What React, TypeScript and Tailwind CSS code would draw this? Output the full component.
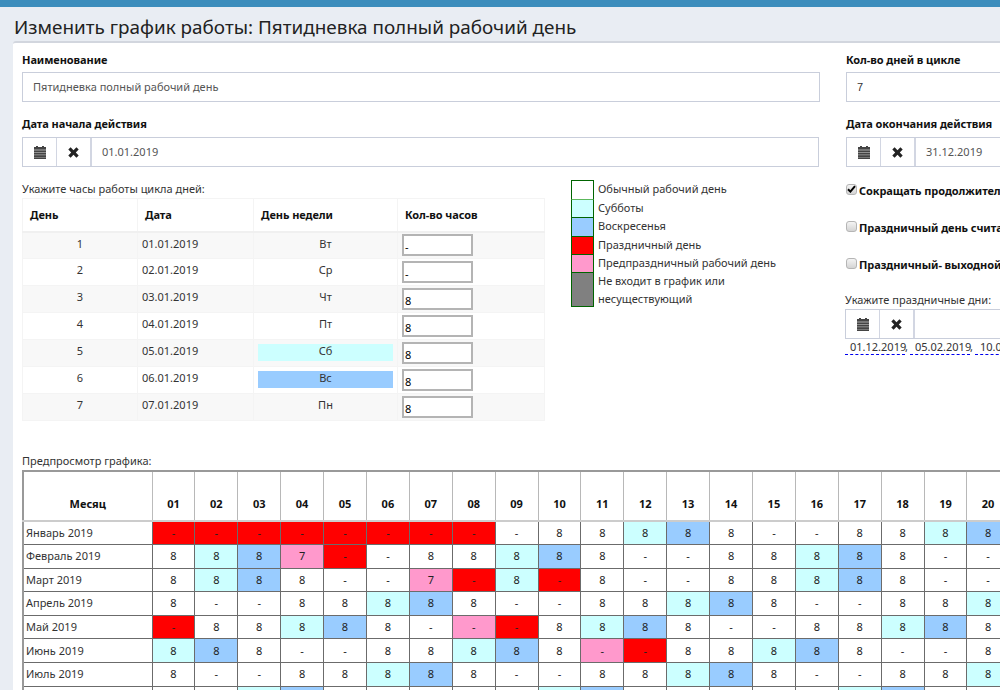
type Cell = string;
const months: [string, string][] = [
  ["Январь 2019", "R- R- R- R- R- R- R- R- - 8 8 S8 U8 8 - - 8 8 S8 U8"],
  ["Февраль 2019", "8 S8 U8 P7 R- - 8 8 S8 U8 8 - - 8 8 S8 U8 8 - -"],
  ["Март 2019", "8 S8 U8 8 - - P7 R- S8 R- 8 - - 8 8 S8 U8 8 - -"],
  ["Апрель 2019", "8 - - 8 8 S8 U8 8 - - 8 8 S8 U8 8 - - 8 8 S8"],
  ["Май 2019", "R- 8 8 S8 U8 8 - P- R- 8 S8 U8 8 - - 8 8 S8 U8 8"],
  ["Июнь 2019", "S8 U8 8 - - 8 8 S8 U8 8 P- R- 8 8 S8 U8 8 - - 8"],
  ["Июль 2019", "8 - - 8 8 S8 U8 8 - - 8 8 S8 U8 8 - - 8 8 S8"],
  ["Август 2019", "8 8 S8 U8 8 - - 8 8 S8 U8 8 - - 8 8 S8 U8 8 -"],
];

const cellBg = (c: Cell) =>
  c[0] === "R"
    ? "bg-[#ff0000]"
    : c[0] === "P"
      ? "bg-[#ff99cc]"
      : c[0] === "S"
        ? "bg-[#ccffff]"
        : c[0] === "U"
          ? "bg-[#99ccff]"
          : "bg-white";

const cellText = (c: Cell) => c.replace(/^[RPSU]/, "");

const days = ["01", "02", "03", "04", "05", "06", "07", "08", "09", "10", "11", "12", "13", "14", "15", "16", "17", "18", "19", "20"];

const cycle = [
  ["1", "01.01.2019", "Вт", "-", ""],
  ["2", "02.01.2019", "Ср", "-", ""],
  ["3", "03.01.2019", "Чт", "8", ""],
  ["4", "04.01.2019", "Пт", "8", ""],
  ["5", "05.01.2019", "Сб", "8", "bg-[#ccffff]"],
  ["6", "06.01.2019", "Вс", "8", "bg-[#99ccff]"],
  ["7", "07.01.2019", "Пн", "8", ""],
];

const legend: [string, string][] = [
  ["bg-white h-[19px]", "Обычный рабочий день"],
  ["bg-[#ccffff] h-[18px]", "Субботы"],
  ["bg-[#99ccff] h-[19px]", "Воскресенья"],
  ["bg-[#ff0000] h-[18px]", "Праздничный день"],
  ["bg-[#ff99cc] h-[18px]", "Предпраздничный рабочий день"],
];

function CalendarIcon() {
  return (
    <svg width="12" height="13" viewBox="0 0 12 13" className="text-[#444]">
      <path fill="currentColor" d="M2 0h2v1h4V0h2v1h2v12H0V1h2z" />
      <path fill="#fff" fillOpacity="0.55" d="M0 3.5h12v1H0zM0 6.3h12v.6H0zM0 8.6h12v.6H0zM0 10.9h12v.6H0z" />
    </svg>
  );
}

function CrossIcon() {
  return (
    <svg width="11" height="11" viewBox="0 0 11 11" className="text-[#222]">
      <path fill="currentColor" d="M2.6 0.3 5.5 3.2 8.4 0.3 10.7 2.6 7.8 5.5 10.7 8.4 8.4 10.7 5.5 7.8 2.6 10.7 0.3 8.4 3.2 5.5 0.3 2.6z" />
    </svg>
  );
}

function DateField({ value, className }: { value: string; className: string }) {
  return (
    <div className={`flex h-[30px] border border-[#c9cedb] bg-white ${className}`}>
      <div className="flex w-[34px] shrink-0 items-center justify-center border-r border-[#d2d6e2]">
        <CalendarIcon />
      </div>
      <div className="flex w-[35px] shrink-0 items-center justify-center border-r-2 border-[#d2d6e2]">
        <CrossIcon />
      </div>
      <div className="flex items-center pl-[10px] text-[#555]">{value}</div>
    </div>
  );
}

function Check({ checked, label, className }: { checked?: boolean; label: string; className: string }) {
  return (
    <div className={`flex h-[16px] items-center whitespace-nowrap font-bold tracking-[-0.08px] text-[#111] ${className}`}>
      <span className="relative mr-[2px] -mt-[4px] flex h-[11px] w-[11px] shrink-0 items-center justify-center rounded-[3px] border border-[#b5b5b5] bg-gradient-to-b from-[#f4f4f4] to-[#d4d4d4]">
        {checked && (
          <svg width="9" height="8" viewBox="0 0 9 8">
            <path d="M1 4.2 3.4 6.6 8 1.2" fill="none" stroke="#000" strokeWidth="2" />
          </svg>
        )}
      </span>
      {label}
    </div>
  );
}

export default function App() {
  return (
    <div className="flex h-[690px] w-[1000px] flex-col overflow-hidden bg-[#e9edf3] font-['Noto_Sans',sans-serif] text-[11px] text-[#333]">
      <div className="h-[7px] shrink-0 bg-[#3c8dbc]" />
      <h1 className="h-[34px] shrink-0 whitespace-nowrap pl-[14px] pt-[7px] text-[18.9px] leading-[27px] text-[#222]">
        Изменить график работы: Пятидневка полный рабочий день
      </h1>
      <div className="ml-[13px] flex-1 rounded-tl-[3px] border-t-2 border-[#d2d6de] bg-white pl-[9px] pt-[11px]">
        <div className="flex h-[399px]">
          <div className="w-[798px] shrink-0">
            <div className="h-[16px] font-bold leading-[12px] tracking-[-0.08px] text-[#111]">Наименование</div>
            <div className="mt-[2px] flex h-[30px] items-center border border-[#c9cedb] pl-[10px] text-[#555]">
              Пятидневка полный рабочий день
            </div>
            <div className="mt-[14px] h-[16px] font-bold leading-[16px] tracking-[-0.08px] text-[#111]">Дата начала действия</div>
            <DateField value="01.01.2019" className="mt-[5px] w-[797px]" />
            <div className="flex">
              <div className="w-[522px] shrink-0">
                <div className="mt-[14px] h-[17px] leading-[16px]">Укажите часы работы цикла дней:</div>
                <table className="w-[522px] table-fixed border-collapse">
                  <colgroup>
                    <col className="w-[115px]" />
                    <col className="w-[116px]" />
                    <col className="w-[144px]" />
                    <col className="w-[147px]" />
                  </colgroup>
                  <thead>
                    <tr className="h-[33px] border-b-2 border-[#f0f0f0] text-[#111]">
                      <th className="border border-[#f4f4f4] pl-[7px] text-left font-bold tracking-[-0.08px]">День</th>
                      <th className="border border-[#f4f4f4] pl-[7px] text-left font-bold tracking-[-0.08px]">Дата</th>
                      <th className="border border-[#f4f4f4] pl-[7px] text-left font-bold tracking-[-0.08px]">День недели</th>
                      <th className="border border-[#f4f4f4] pl-[7px] text-left font-bold tracking-[-0.08px]">Кол-во часов</th>
                    </tr>
                  </thead>
                  <tbody>
                    {cycle.map((r, i) => (
                      <tr key={r[0]} className={`h-[27px] ${i % 2 === 0 ? "bg-[#f8f8f8]" : "bg-white"}`}>
                        <td className="border border-[#f4f4f4] pb-[3px] text-center">{r[0]}</td>
                        <td className="border border-[#f4f4f4] pb-[3px] pl-[4px]">{r[1]}</td>
                        <td className="border border-[#f4f4f4] px-[4px] text-center">
                          <div className={`mb-[2px] flex h-[17px] items-center justify-center pb-[1px] ${r[4]}`}>{r[2]}</div>
                        </td>
                        <td className="border border-[#f4f4f4] pl-[4px]">
                          <div className="flex h-[22px] w-[71px] items-center border-2 border-[#b4b4b4] bg-white pl-[1px] pt-[2px] leading-none text-black">
                            {r[3]}
                          </div>
                        </td>
                      </tr>
                    ))}
                  </tbody>
                </table>
              </div>
              <div className="ml-[27px] mt-[13px] flex w-[230px] flex-col">
                {legend.map(([bg, text], i) => (
                  <div key={text} className="flex items-stretch">
                    <div className={`w-[23px] shrink-0 border-x border-t ${i === 1 ? "border-t-[#5cb85c]" : ""} border-[#006400] ${bg}`} />
                    <div className="pl-[4px] leading-[18px]">{text}</div>
                  </div>
                ))}
                <div className="flex items-stretch">
                  <div className="h-[35px] w-[23px] shrink-0 border border-[#006400] bg-[#808080]" />
                  <div className="pl-[4px] leading-[17.5px]">
                    Не входит в график или
                    <br />
                    несуществующий
                  </div>
                </div>
              </div>
            </div>
          </div>
          <div className="ml-[26px] w-[260px] shrink-0 text-[#111]">
            <div className="h-[16px] whitespace-nowrap font-bold leading-[12px] tracking-[-0.08px]">Кол-во дней в цикле</div>
            <div className="mt-[2px] flex h-[30px] items-center border border-[#c9cedb] pl-[10px] font-['Liberation_Sans',sans-serif] text-[#333]">
              7
            </div>
            <div className="mt-[14px] h-[16px] whitespace-nowrap font-bold leading-[16px] tracking-[-0.08px]">Дата окончания действия</div>
            <DateField value="31.12.2019" className="mt-[5px] w-[260px]" />
            <Check checked label="Сокращать продолжительность предпраздничного дня" className="mt-[16px]" />
            <Check label="Праздничный день считать выходным днём" className="mt-[21px]" />
            <Check label="Праздничный- выходной день переносится" className="mt-[21px]" />
            <div className="-ml-[1px] mt-[19px] h-[16px] whitespace-nowrap leading-[16px] text-[#333]">Укажите праздничные дни:</div>
            <DateField value="" className="-ml-[1px] mt-[1px] w-[260px]" />
            <div className="-ml-[1px] flex gap-[2px] whitespace-nowrap leading-[15px] text-[#333]">
              {["01.12.2019", "05.02.2019", "10.03.2019"].map((d) => (
                <span key={d} className="flex">
                  <span className="w-[60px] border-b border-dashed border-[#0000ee] pl-[5px]">{d}</span>,
                </span>
              ))}
            </div>
          </div>
        </div>
        <div className="h-[16px] leading-[16px]">Предпросмотр графика:</div>
        <table className="mt-[1px] w-[987px] table-fixed border-collapse border-2 border-[#999]">
          <colgroup>
            <col className="w-[129px]" />
            {days.map((d) => (
              <col key={d} className="w-[42.9px]" />
            ))}
          </colgroup>
          <thead>
            <tr className="h-[50px] border-b-2 border-[#ccc] text-[#111]">
              <th className="border border-[#bbb] pb-[8px] align-bottom font-bold">Месяц</th>
              {days.map((d) => (
                <th key={d} className="border border-[#b8b8b8] pb-[8px] align-bottom font-bold">
                  {d}
                </th>
              ))}
            </tr>
          </thead>
          <tbody>
            {months.map(([m, row]) => (
              <tr key={m} className="h-[23.6px]">
                <td className="overflow-hidden whitespace-nowrap border border-[#6b6b6b] pl-[2px] text-[#333]">{m}</td>
                {row.split(" ").map((c, i) => (
                  <td key={i} className={`border border-[#6b6b6b] text-center text-[#222] ${cellBg(c)}`}>
                    {cellText(c)}
                  </td>
                ))}
              </tr>
            ))}
          </tbody>
        </table>
      </div>
    </div>
  );
}
